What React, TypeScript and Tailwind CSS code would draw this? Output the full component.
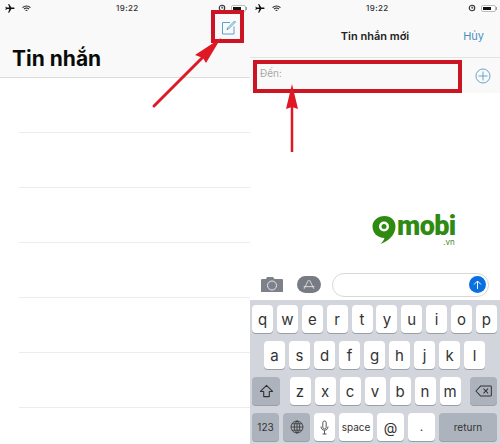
import React from "react";

const font = { fontFamily: '"Inter", "Liberation Sans", sans-serif' };

function StatusBar() {
  return (
    <div className="relative flex h-[15px] items-center justify-between pl-[4px] pr-[3px] pt-[1px]">
      <div className="flex items-center gap-[6px]">
        <svg width="12" height="11" viewBox="0 0 24 24" fill="#111"><path d="M21 16v-2l-8-5V3.500a1.500 1.500 0 0 0-3 0V9l-8 5v2l8-2.500V19l-2 1.500V22l3.500-1 3.500 1v-1.500L13 19v-5.500z" transform="rotate(90 12 12)" /></svg>
        <svg width="9" height="7" viewBox="0 0 20 16" fill="none" stroke="#222" strokeWidth="2.600"><path d="M1 6c5-5 13-5 18 0M4.500 9.500c3-3 8-3 11 0M8 13c1-1 3-1 4 0" /></svg>
      </div>
      <span className="absolute left-[116px] text-[8px] font-medium tracking-[0.4px] text-[#333]">19:22</span>
      <div className="flex items-center gap-[5px]">
        <svg width="8" height="8" viewBox="0 0 16 16" fill="none" stroke="#333" strokeWidth="2.200"><circle cx="8" cy="8" r="5.500" /><path d="M8 5v3h2.500" /></svg>
        <div className="flex items-center">
          <div className="h-[7px] w-[15px] rounded-[2px] border border-[#bbb] bg-white p-[1px]"><div className="h-full w-[8px] bg-[#111]" /></div>
          <div className="h-[3px] w-[1px] bg-[#999]" />
        </div>
      </div>
    </div>
  );
}

const Key = ({ c, w = "w-[21px]" }: { c: string; w?: string }) => (
  <div className={`flex h-[28px] ${w} items-center justify-center rounded-[4px] bg-white text-[15px] leading-none text-[#333] shadow-[0_1px_0_#9a9ea6]`}>{c}</div>
);
const Dark = ({ children, w }: { children: React.ReactNode; w: string }) => (
  <div className={`flex h-[28px] ${w} items-center justify-center rounded-[4px] bg-[#adb3bd] text-[10px] text-[#333] shadow-[0_1px_0_#9a9ea6]`}>{children}</div>
);

function Keyboard() {
  return (
    <div className="flex h-[144px] flex-col gap-[8px] bg-[#d2d5db] px-[2px] pt-[5px]">
      <div className="flex justify-between pr-[1px]">
        {"qwertyuiop".split("").map((c) => <Key key={c} c={c} />)}
      </div>
      <div className="flex justify-center gap-[4px] pr-[1px]">
        {"asdfghjkl".split("").map((c) => <Key key={c} c={c} />)}
      </div>
      <div className="flex items-center justify-between pr-[1px]">
        <Dark w="w-[28px]">
          <svg width="15" height="14" viewBox="0 0 16 15" fill="none" stroke="#333" strokeWidth="1.200" strokeLinejoin="round"><path d="M8 1.500 14.500 8H11v5.500H5V8H1.500z" /></svg>
        </Dark>
        <div className="flex gap-[4px]">
          {"zxcvbnm".split("").map((c) => <Key key={c} c={c} />)}
        </div>
        <Dark w="w-[27px]">
          <svg width="17" height="12" viewBox="0 0 18 13" fill="none" stroke="#333" strokeWidth="1.100" strokeLinejoin="round"><path d="M6 1h10.500a1 1 0 0 1 1 1v9a1 1 0 0 1-1 1H6L.8 6.500z" /><path d="m9 4 5 5m0-5-5 5" /></svg>
        </Dark>
      </div>
      <div className="flex gap-[4px] pr-[1px]">
        <Dark w="w-[27px]"><span className="text-[10px]">123</span></Dark>
        <Dark w="w-[27px]">
          <svg width="14" height="14" viewBox="0 0 14 14" fill="none" stroke="#333" strokeWidth="0.800"><circle cx="7" cy="7" r="6" /><ellipse cx="7" cy="7" rx="2.700" ry="6" /><path d="M1 7h12M2 3.800h10M2 10.200h10M7 1v12" /></svg>
        </Dark>
        <div className="flex h-[28px] w-[21px] items-center justify-center rounded-[4px] bg-white shadow-[0_1px_0_#9a9ea6]">
          <svg width="9" height="15" viewBox="0 0 9 15" fill="none" stroke="#444" strokeWidth="0.900"><rect x="2.800" y="1" width="3.400" height="8" rx="1.700" /><path d="M1 6.500c0 5 7 5 7 0M4.500 10.500V14M2.500 14h4" /></svg>
        </div>
        <div className="flex h-[28px] w-[34px] items-center justify-center rounded-[4px] bg-white text-[10px] text-[#333] shadow-[0_1px_0_#9a9ea6]">space</div>
        <div className="flex h-[28px] w-[27px] items-center justify-center rounded-[4px] bg-white text-[14px] text-[#333] shadow-[0_1px_0_#9a9ea6]">@</div>
        <div className="flex h-[28px] w-[27px] items-center justify-center rounded-[4px] bg-white text-[12px] text-[#333] shadow-[0_1px_0_#9a9ea6]">.</div>
        <Dark w="flex-1"><span className="text-[10px]">return</span></Dark>
      </div>
    </div>
  );
}

function Logo() {
  return (
    <div className="absolute left-[371px] top-[215px] flex items-start">
      <svg width="26" height="31" viewBox="0 0 25 31" className="shrink-0">
        <path fill="#2f8a12" d="M13 1c6.500 0 11 4.500 11 10.500 0 8-7 15-15 17.500 2-2 3.500-4 4-6C6 23 1 18 1 11.500 1 5.500 6.500 1 13 1z" />
        <circle cx="12.500" cy="11.500" r="5" fill="#fff" />
        <circle cx="12.500" cy="11.500" r="2.500" fill="#2f8a12" />
      </svg>
      <div className="flex flex-col items-end">
        <span className="text-[27px] font-black leading-[23px] tracking-[-0.6px] text-[#2f8a12]" style={{ fontFamily: '"Roboto", "Liberation Sans", sans-serif' }}>mobi</span>
        <span className="mr-[1px] text-[8px] leading-[9px] text-[#3c8a22]">.vn</span>
      </div>
    </div>
  );
}

export default function App() {
  const rows = [0, 1, 2, 3, 4, 5];
  return (
    <div className="relative h-[444px] w-[500px] overflow-hidden bg-white" style={font}>
      <div className="flex h-full">
        <div className="flex h-full w-[250px] flex-col">
          <div className="h-[78px] border-b border-[#dcdcdc] bg-[#f9f9f9]">
            <StatusBar />
            <h1 className="pl-[12px] pt-[29px] text-[21px] font-bold leading-[30px] text-[#0a0a0a]">Tin nhắn</h1>
          </div>
          {rows.map((r) => (
            <div key={r} className="ml-[19px] h-[55px] shrink-0 border-b border-[#ececec]" />
          ))}
        </div>
        <div className="flex h-full w-[250px] flex-col">
          <div className="h-[58px] border-b border-[#e4e4e4] bg-[#f9f9f9]">
            <StatusBar />
            <div className="relative flex h-[43px] items-center justify-center">
              <span className="text-[11px] font-semibold text-[#222]">Tin nhắn mới</span>
              <span className="absolute right-[16px] text-[11px] text-[#4a90c2]">Hủy</span>
            </div>
          </div>
          <div className="flex h-[35px] items-center justify-between bg-[#f9f9f9] pl-[10px] pr-[9px]">
            <span className="pb-[4px] text-[10px] text-[#a8a8a8]">Đến:</span>
            <svg width="16" height="16" viewBox="0 0 16 16" fill="none" stroke="#5a9cc8" strokeWidth="0.900"><circle cx="8" cy="8" r="7" /><path d="M8 3.500v9M3.500 8h9" /></svg>
          </div>
          <div className="flex-1" />
          <div className="mb-[1px] flex h-[28px] items-center px-[11px] pb-[1px]">
            <svg width="22" height="17" viewBox="0 0 22 17" className="shrink-0">
              <path fill="#7d828a" d="M1 3h4l1-2h6l1.500 2H21a1 1 0 0 1 1 1v12H0V4a1 1 0 0 1 1-1z" />
              <circle cx="11" cy="9.500" r="4.500" fill="none" stroke="#e6e6e6" strokeWidth="1" />
            </svg>
            <div className="ml-[14px] flex h-[17px] w-[24px] shrink-0 items-center justify-center rounded-[9px] bg-[#777b84]">
              <svg width="14" height="12" viewBox="0 0 12 11" fill="none" stroke="#e6e6e6" strokeWidth="0.800"><path d="M6.500 1 10.500 9M5.500 1 1.500 9M1 7h10" /></svg>
            </div>
            <div className="ml-[11px] flex h-[24px] flex-1 items-center justify-end rounded-[12px] border border-[#d8d8d8] pr-[2px]">
              <div className="flex h-[17px] w-[17px] items-center justify-center rounded-full bg-[#0a6fe0]">
                <svg width="9" height="10" viewBox="0 0 9 10" fill="none" stroke="#fff" strokeWidth="1"><path d="M4.500 9V1M1 4.500 4.500 1 8 4.500" /></svg>
              </div>
            </div>
          </div>
          <Keyboard />
        </div>
      </div>

      <div className="absolute left-[211px] top-[10px] h-[33px] w-[33px] border-[4px] border-[#cc1524]" />
      <div className="absolute left-[221px] top-[20px]">
        <svg width="16" height="15" viewBox="0 0 16 15" fill="none" stroke="#5a9fd0" strokeWidth="1"><path d="M9 2.500H1.500v11.500h11.500V6.500" /><path d="M6 9.800 6.500 8 13.500 1l1 1-7 7z" /></svg>
      </div>
      <div className="absolute left-[253px] top-[60px] h-[33px] w-[209px] border-[4px] border-[#cc1524]" />
      <svg className="absolute left-[150px] top-[35px]" width="75" height="75" viewBox="0 0 75 75">
        <path d="M4 71 55 20" stroke="#e01825" strokeWidth="3" strokeLinecap="round" />
        <path d="M71 3 56 28 53 23 45 20z" fill="#e01825" />
      </svg>
      <svg className="absolute left-[285px] top-[82px]" width="14" height="72" viewBox="0 0 14 72">
        <path d="M7 20V70" stroke="#e01825" strokeWidth="2.500" />
        <path d="M7 2 13 27 7 25 1 27z" fill="#e01825" />
      </svg>
      <Logo />
    </div>
  );
}
